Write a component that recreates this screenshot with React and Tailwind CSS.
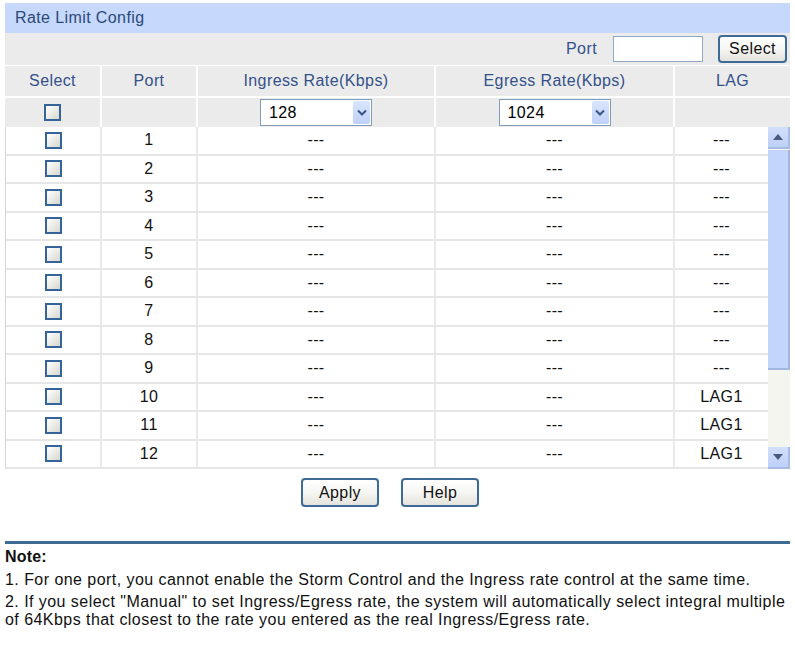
import React from "react";

const Checkbox = () => (
  <span className="inline-block w-[17px] h-[17px] border-2 border-[#34649a] bg-gradient-to-br from-white to-[#d8d8d0]" />
);

const Chevron = () => (
  <svg width="10" height="7" viewBox="0 0 10 7">
    <path d="M1 1.5 L5 5.5 L9 1.5" fill="none" stroke="#3a5585" strokeWidth="2" />
  </svg>
);

const Dropdown = ({ value }) => (
  <div className="flex items-center w-[112px] h-[27px] border border-[#7f9db9] bg-white">
    <span className="flex-1 pl-[8px] text-left text-black">{value}</span>
    <span className="flex items-center justify-center w-[17px] h-[23px] mr-[1px] rounded-[2px] bg-gradient-to-b from-[#dae5fd] to-[#bfd1f8]">
      <Chevron />
    </span>
  </div>
);

const Btn = ({ children, w = "w-[78px]", h = "h-[29px]" }) => (
  <button className={`${w} ${h} rounded-[4px] border-2 border-[#3d6a98] bg-gradient-to-b from-white via-[#f6f6f3] to-[#e4e3dc] text-[#111] flex items-center justify-center`}>
    {children}
  </button>
);

const rows = [
  ["1", "---"],
  ["2", "---"],
  ["3", "---"],
  ["4", "---"],
  ["5", "---"],
  ["6", "---"],
  ["7", "---"],
  ["8", "---"],
  ["9", "---"],
  ["10", "LAG1"],
  ["11", "LAG1"],
  ["12", "LAG1"],
];

export default function App() {
  return (
    <div className="w-[795px] h-[652px] bg-white font-['Liberation_Sans',Arial,sans-serif] text-[16px] tracking-[0.4px] overflow-hidden">
      <div className="ml-[5px] mt-[3px] w-[785px]">
        {/* Title */}
        <div className="h-[30px] bg-[#c6d8fc] flex items-center pl-[10px] text-[#2b4a78]">
          Rate Limit Config
        </div>
        {/* Port search row */}
        <div className="h-[32px] bg-[#ebebeb] flex items-center justify-end pr-[3px] text-[#33518a]">
          <span className="mr-[16px]">Port</span>
          <div className="w-[90px] h-[26px] border border-[#8fa8c4] bg-white mr-[15px]" />
          <Btn w="w-[69px]" h="h-[28px]">Select</Btn>
        </div>
        {/* Header */}
        <div className="grid grid-cols-[97px_96px_238px_239px_1fr] h-[31px] bg-[#ebebeb] border-t border-white text-[#33518a]">
          <div className="flex items-center justify-center border-r-2 border-white">Select</div>
          <div className="flex items-center justify-center border-r-2 border-white">Port</div>
          <div className="flex items-center justify-center border-r-2 border-white">Ingress Rate(Kbps)</div>
          <div className="flex items-center justify-center border-r-2 border-white">Egress Rate(Kbps)</div>
          <div className="flex items-center justify-center">LAG</div>
        </div>
        <div className="grid grid-cols-[97px_96px_238px_239px_1fr] h-[31px] bg-[#ebebeb] border-t-2 border-white">
          <div className="flex items-center justify-center border-r-2 border-white"><Checkbox /></div>
          <div className="border-r-2 border-white" />
          <div className="flex items-center justify-center border-r-2 border-white"><Dropdown value="128" /></div>
          <div className="flex items-center justify-center border-r-2 border-white"><Dropdown value="1024" /></div>
          <div />
        </div>
        {/* Body */}
        <div className="flex h-[342px] border-l border-[#d6d6d6]">
          <div className="flex-1 overflow-hidden">
            {rows.map(([p, lag]) => (
              <div key={p} className="grid grid-cols-[96px_96px_238px_239px_1fr] h-[28.5px] border-b-2 border-[#e6e6e6] text-[#111]">
                <div className="flex items-center justify-center border-r-2 border-[#e9e9e9]"><Checkbox /></div>
                <div className="flex items-center justify-center border-r-2 border-[#e9e9e9]">{p}</div>
                <div className="flex items-center justify-center border-r-2 border-[#e9e9e9]">---</div>
                <div className="flex items-center justify-center border-r-2 border-[#e9e9e9]">---</div>
                <div className="flex items-center justify-center">{lag}</div>
              </div>
            ))}
          </div>
          {/* Scrollbar */}
          <div className="w-[22px] flex flex-col bg-[#f5f5ef]">
            <div className="h-[22px] flex items-center justify-center bg-gradient-to-b from-[#d2dffb] to-[#bdd0f7] border-r-2 border-b-2 border-[#a6bce4]">
              <svg width="10" height="6" viewBox="0 0 10 6"><path d="M0 6 L5 0 L10 6 Z" fill="#475a80" /></svg>
            </div>
            <div className="h-[220px] mt-[1px] bg-[#c3d5fb] border-r-2 border-b-2 border-[#a2b7de]" />
            <div className="flex-1" />
            <div className="h-[22px] flex items-center justify-center bg-gradient-to-b from-[#d2dffb] to-[#bdd0f7] border-r-2 border-b-2 border-[#a6bce4]">
              <svg width="10" height="6" viewBox="0 0 10 6"><path d="M0 0 L5 6 L10 0 Z" fill="#475a80" /></svg>
            </div>
          </div>
        </div>
        {/* Buttons */}
        <div className="flex gap-[22px] pl-[296px] mt-[9px]">
          <Btn>Apply</Btn>
          <Btn>Help</Btn>
        </div>
        {/* Note */}
        <div className="mt-[34px] h-[3px] bg-[#3d6b94]" />
        <div className="text-[16px] tracking-[0.45px] text-[#111] leading-[18px]">
          <div className="font-bold mt-[4px] tracking-[0.2px]">Note:</div>
          <div className="mt-[5px] whitespace-nowrap">1. For one port, you cannot enable the Storm Control and the Ingress rate control at the same time.</div>
          <div className="mt-[4px] whitespace-nowrap">
            2. If you select "Manual" to set Ingress/Egress rate, the system will automatically select integral multiple
            <br />
            of 64Kbps that closest to the rate you entered as the real Ingress/Egress rate.
          </div>
        </div>
      </div>
    </div>
  );
}
